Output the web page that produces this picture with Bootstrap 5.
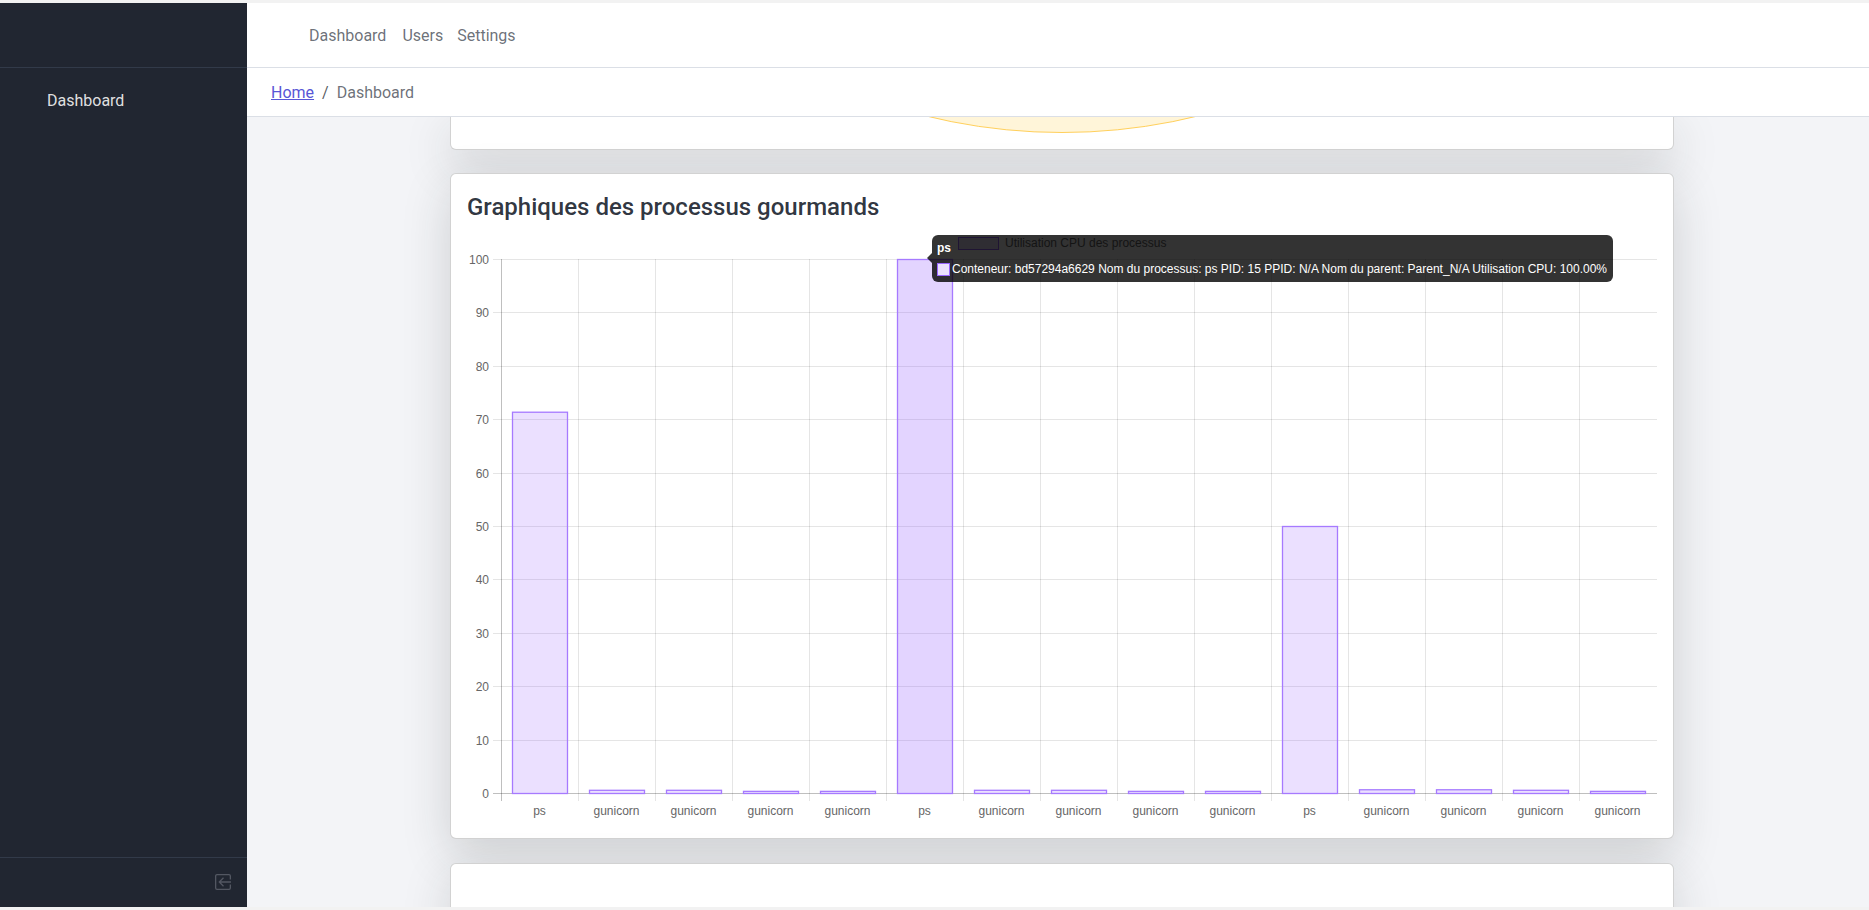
<!DOCTYPE html>
<html lang="fr">
<head>
  <meta charset="UTF-8">
  <meta name="viewport" content="width=device-width, initial-scale=1.0">
  <title>Dashboard</title>
  <link href="https://cdn.jsdelivr.net/npm/bootstrap@5.3.2/dist/css/bootstrap.min.css" rel="stylesheet">
  <style>
    html, body { height: 100%; }
    body {
      background: #f2f2f2;
      padding: 3px 0;
      overflow: hidden;
      font-family: Roboto, "Liberation Sans", sans-serif;
      color: rgba(37,43,54,.95);
    }
    .app-frame { height: 904px; }
    .side-panel { width: 247px; background: #212631; flex-shrink: 0; }
    .side-top { height: 65px; border-bottom: 1px solid #323a49; }
    .side-link { color: rgba(255,255,255,.87); padding: 21px 0 0 47px; line-height: 24px; text-decoration: none; display: block; }
    .side-foot { height: 50px; border-top: 1px solid #323a49; padding: 16px 16px 0 0; }
    .top-nav { height: 65px; background: #fff; border-bottom: 1px solid #dbdfe6; padding: 2px 0 0 54px; flex-shrink: 0; }
    .top-nav .nav-link { color: rgba(37,43,54,.68); padding: 8px; line-height: 24px; }
    .top-nav .nav-item:last-child { margin-left: -2px; }
    .crumb-bar { height: 49px; background: #fff; border-bottom: 1px solid #dbdfe6; padding: 2px 24px 0; position: relative; z-index: 2; flex-shrink: 0; }
    .crumb-bar .breadcrumb-item a { color: #5856d6; }
    .crumb-bar .breadcrumb-item.active { color: rgba(37,43,54,.68); }
    .page-scroll { background: #f3f4f7; overflow: hidden; padding-left: 203px; }
    .page-col { width: 1224px; }
    .pie-stub { height: 33px; border-top: 0; border-radius: 0 0 .375rem .375rem; margin-bottom: 23px; overflow: hidden; }
    .pie-stub svg { display: block; }
    .chart-title { font-size: 24px; font-weight: 500; line-height: 29px; margin: 0; padding: 3px 0 10px; color: rgba(37,43,54,.95); }
    .chart-wrap { position: relative; width: 1190px; height: 590px; }
    .chart-wrap svg { display: block; font-family: "Liberation Sans", Arial, sans-serif; }
    .hover-tip {
      position: absolute; left: 465px; top: 3px; width: 681px; height: 47px;
      background: rgba(0,0,0,.8); border-radius: 6px; color: #fff;
      font-family: "Liberation Sans", Arial, sans-serif; font-size: 12px; line-height: 14px;
      padding: 6px 5px;
    }
    .hover-tip::before {
      content: ""; position: absolute; left: -5px; top: 18px;
      border: 5px solid transparent; border-left-width: 0; border-right-color: rgba(0,0,0,.8);
    }
    .tip-head { font-weight: 700; margin-bottom: 7px; }
    .tip-swatch { width: 13px; height: 13px; background: #ebe0ff; border: 1px solid #9966ff; margin-right: 2px; flex-shrink: 0; }
    .tip-line { white-space: nowrap; }
    .last-stub { height: 60px; margin-top: 24px; }
  </style>
</head>
<body>

<div class="app-frame d-flex">
  <div class="side-panel d-flex flex-column">
    <div class="side-top"></div>
    <a class="side-link flex-grow-1" href="#">Dashboard</a>
    <div class="side-foot d-flex justify-content-end">
      <svg width="16" height="16" viewBox="0 0 16 16" fill="none" stroke="#535762" stroke-width="1.300">
        <path d="M15.350 5.500V2A1.350 1.350 0 0 0 14 .650H2A1.350 1.350 0 0 0 .650 2v12A1.350 1.350 0 0 0 2 15.350h12a1.350 1.350 0 0 0 1.350-1.350v-3.500"/>
        <path d="M16 8H4.500M8.500 3.800 4.300 8l4.200 4.200"/>
      </svg>
    </div>
  </div>

  <div class="flex-grow-1 d-flex flex-column overflow-hidden">
    <div class="top-nav d-flex align-items-center">
      <ul class="nav">
        <li class="nav-item"><a class="nav-link" href="#">Dashboard</a></li>
        <li class="nav-item"><a class="nav-link" href="#">Users</a></li>
        <li class="nav-item"><a class="nav-link" href="#">Settings</a></li>
      </ul>
    </div>
    <div class="crumb-bar d-flex align-items-center">
      <ol class="breadcrumb mb-0">
        <li class="breadcrumb-item"><a href="#">Home</a></li>
        <li class="breadcrumb-item active">Dashboard</li>
      </ol>
    </div>
    <div class="page-scroll flex-grow-1">
      <div class="page-col">
        <div class="card shadow-lg pie-stub">
          <svg width="1222" height="33" viewBox="0 0 1222 33">
            <circle cx="611" cy="-570" r="586" fill="#fff5d9" stroke="#ffcd56" stroke-width="1"/>
          </svg>
        </div>
        <div class="card shadow-lg">
          <div class="card-body p-3">
            <h4 class="chart-title">Graphiques des processus gourmands</h4>
            <div class="chart-wrap">
              <svg id="cpu-chart" width="1190" height="590" viewBox="0 0 1190 590"></svg>
              <div class="hover-tip">
                <div class="tip-head">ps</div>
                <div class="d-flex align-items-center">
                  <span class="tip-swatch"></span>
                  <span class="tip-line">Conteneur: bd57294a6629 Nom du processus: ps PID: 15 PPID: N/A Nom du parent: Parent_N/A Utilisation CPU: 100.00%</span>
                </div>
              </div>
            </div>
          </div>
        </div>
        <div class="card shadow-lg last-stub"></div>
      </div>
    </div>
  </div>
</div>

<script src="https://cdn.jsdelivr.net/npm/bootstrap@5.3.2/dist/js/bootstrap.bundle.min.js"></script>
<script>
  // dessine le graphique en barres dans le svg
  var noms = ["ps","gunicorn","gunicorn","gunicorn","gunicorn","ps","gunicorn","gunicorn","gunicorn","gunicorn","ps","gunicorn","gunicorn","gunicorn","gunicorn"];
  var valeurs = [71.4,0.6,0.6,0.4,0.4,100,0.6,0.6,0.4,0.4,50,0.7,0.7,0.6,0.4];
  var x0 = 34, x1 = 1190, y0 = 27, y1 = 561;
  var pasX = 77, pasY = (y1 - y0) / 10;
  var out = "";

  // legende (cachee en partie par le tooltip)
  out += '<rect x="491.500" y="5.500" width="40" height="12" fill="rgba(153,102,255,.2)" stroke="#9966ff"/>';
  out += '<text x="538" y="15" font-size="12" fill="#666">Utilisation CPU des processus</text>';

  for (var i = 0; i <= 10; i++) {
    var y = Math.round(y1 - i * pasY) + 0.5;
    out += '<line x1="' + (x0 - 8) + '" x2="' + x1 + '" y1="' + y + '" y2="' + y + '" stroke="' + (i == 0 ? "rgba(0,0,0,.25)" : "rgba(0,0,0,.1)") + '"/>';
    out += '<text x="' + (x0 - 12) + '" y="' + (y + 4) + '" font-size="12" fill="#666" text-anchor="end">' + (i * 10) + '</text>';
  }
  for (var j = 0; j < 15; j++) {
    var x = Math.round(x0 + j * pasX) + 0.5;
    out += '<line x1="' + x + '" x2="' + x + '" y1="' + y0 + '" y2="' + (y1 + 8) + '" stroke="' + (j == 0 ? "rgba(0,0,0,.25)" : "rgba(0,0,0,.1)") + '"/>';
  }
  valeurs.forEach(function(v, k) {
    var cx = x0 + (k + 0.5) * pasX;
    var h = (y1 - y0) * v / 100;
    var fond = k == 5 ? "rgba(153,102,255,.28)" : "rgba(153,102,255,.2)";
    out += '<rect x="' + (Math.round(cx - 27.5) + 0.5) + '" y="' + (y1 - h + 0.5) + '" width="55" height="' + h + '" fill="' + fond + '" stroke="#a67aff" stroke-width="1.300"/>';
    out += '<text x="' + cx + '" y="' + (y1 + 22) + '" font-size="12" fill="#666" text-anchor="middle">' + noms[k] + '</text>';
  });
  document.getElementById("cpu-chart").innerHTML = out;
</script>

</body>
</html>
